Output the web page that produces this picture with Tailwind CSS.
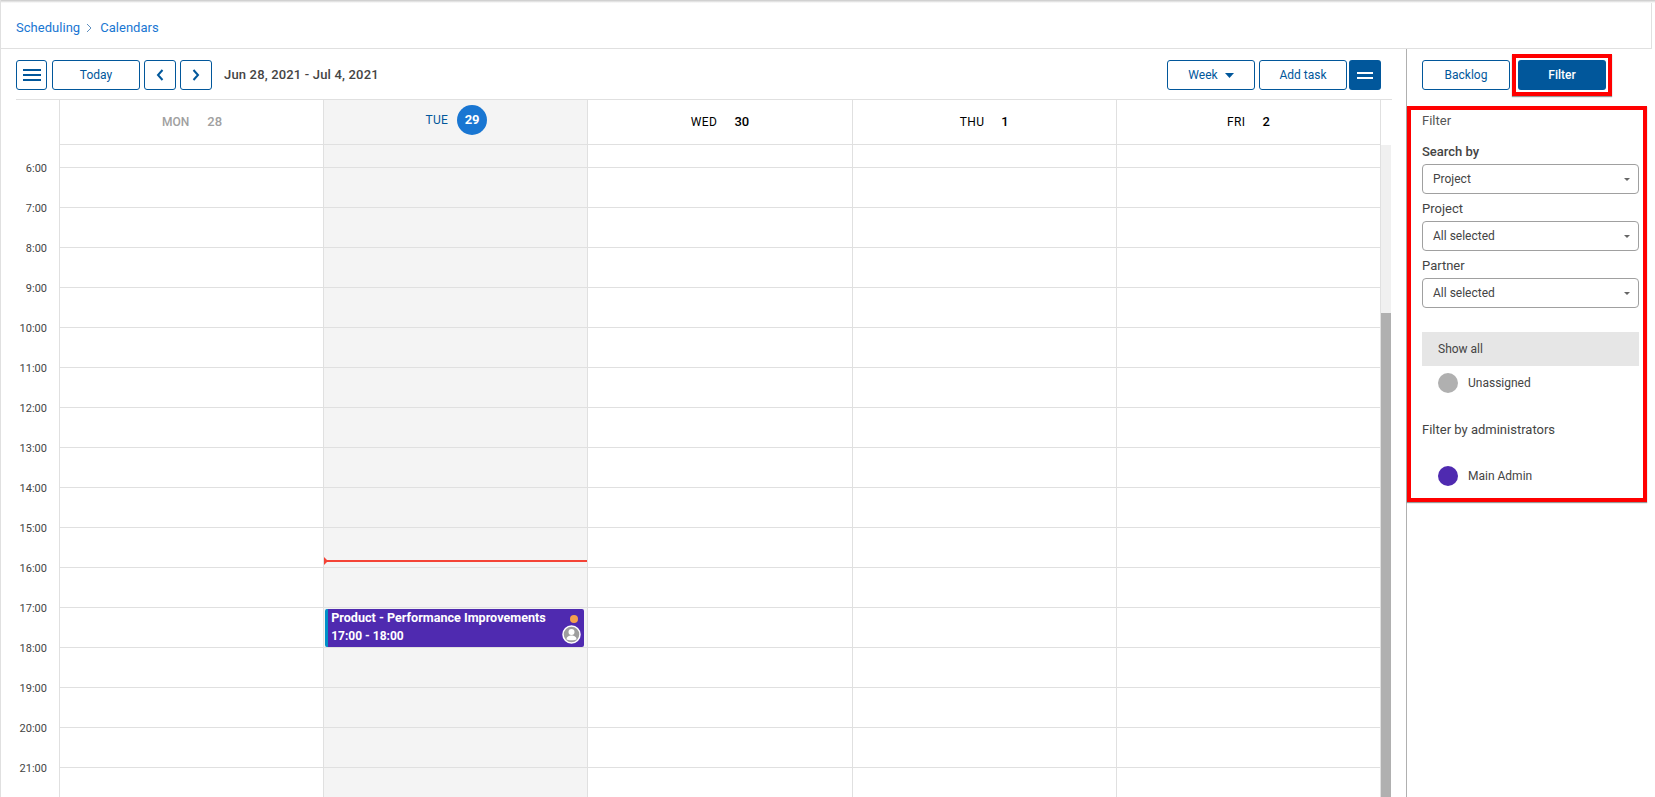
<!DOCTYPE html>
<html lang="en">
<head>
  <meta charset="UTF-8" />
  <title>Calendars</title>
  <script src="https://cdn.jsdelivr.net/npm/@tailwindcss/browser@4"></script>
</head>
<body class="bg-white overflow-hidden font-['Roboto',sans-serif]">
  <div class="h-[797px] w-[1655px] flex flex-col overflow-hidden border-l border-[#e0e0e0] relative">
    <div class="absolute top-0 left-0 right-0 h-[3px] bg-gradient-to-b from-[#c8c8c8] to-white"></div>

    <!-- breadcrumb -->
    <div class="h-[49px] w-[1651px] shrink-0 border-b border-r border-[#e0e0e0] flex items-center pl-[15px] pt-[8px] text-[13px] tracking-[0.03px] text-[#1976d2]">
      <span>Scheduling</span>
      <svg class="w-[8px] h-[10px] ml-[5px] mr-[7px]" viewBox="0 0 8 10" fill="none" stroke="#5f8fc0" stroke-width="1"><path d="M2 1l4 4-4 4"/></svg>
      <span>Calendars</span>
    </div>

    <div class="flex flex-1 min-h-0">
      <!-- calendar -->
      <div class="w-[1405px] shrink-0 pl-[15px] pr-[14px] flex flex-col min-h-0">
        <div class="h-[50px] shrink-0 pt-[11px] flex">
          <button class="w-[31px] h-[30px] border border-[#01579b] rounded-[3px] flex items-center justify-center">
            <svg class="w-[18px] h-[14px]" viewBox="0 0 18 14" fill="none" stroke="#01579b" stroke-width="2"><path d="M0 2h18M0 7h18M0 12h18"/></svg>
          </button>
          <button class="w-[88px] h-[30px] ml-[5px] border border-[#01579b] rounded-[3px] text-[12px] text-[#01579b]">Today</button>
          <button class="w-[32px] h-[30px] ml-[4px] border border-[#01579b] rounded-[3px] flex items-center justify-center">
            <svg class="w-[8px] h-[12px]" viewBox="0 0 8 12" fill="none" stroke="#01579b" stroke-width="2"><path d="M6.5 1L2 6l4.500 5"/></svg>
          </button>
          <button class="w-[32px] h-[30px] ml-[4px] border border-[#01579b] rounded-[3px] flex items-center justify-center">
            <svg class="w-[8px] h-[12px]" viewBox="0 0 8 12" fill="none" stroke="#01579b" stroke-width="2"><path d="M1.5 1L6 6l-4.500 5"/></svg>
          </button>
          <div class="ml-[12px] h-[30px] leading-[29px] text-[13px] font-medium tracking-[0.17px] text-[#444]">Jun 28, 2021 - Jul 4, 2021</div>
          <div class="ml-auto flex pr-[11px]">
            <button class="w-[88px] h-[30px] border border-[#01579b] rounded-[3px] text-[12px] text-[#01579b] flex items-center justify-center gap-[7px]">
              <span>Week</span>
              <svg class="w-[9px] h-[5px]" viewBox="0 0 9 5" fill="#01579b"><path d="M0 0h9L4.500 5z"/></svg>
            </button>
            <button class="w-[88px] h-[30px] ml-[4px] border border-[#01579b] rounded-[3px] text-[12px] text-[#01579b]">Add task</button>
            <button class="w-[32px] h-[30px] ml-[2px] bg-[#01579b] rounded-[3px] flex items-center justify-center">
              <svg class="w-[16px] h-[7px]" viewBox="0 0 16 7" fill="none" stroke="#fff" stroke-width="2"><path d="M0 1h16M0 6h16"/></svg>
            </button>
          </div>
        </div>

        <!-- day header -->
        <div class="h-[46px] shrink-0 border-t border-[#e0e0e0] flex">
          <div class="w-[43px] shrink-0"></div>
          <div class="w-[1322px] grid grid-cols-5 border-r border-[#e0e0e0]">
            <div class="border-l border-b border-[#e0e0e0] flex items-center justify-center pl-[1px] text-[#a0a0a0] font-medium"><span class="text-[12px]">MON</span><span class="text-[13px] ml-[18px]">28</span></div>
            <div class="border-l border-b border-[#e0e0e0] bg-[#f4f4f4] flex items-center justify-center pb-[5px] pl-[1px] text-[#01579b]"><span class="text-[12px] tracking-[0.3px]">TUE</span><span class="w-[30px] h-[30px] ml-[9px] rounded-full bg-[#1976d2] text-white text-[13px] font-bold flex items-center justify-center">29</span></div>
            <div class="border-l border-b border-[#e0e0e0] flex items-center justify-center text-black"><span class="text-[12px] tracking-[0.4px]">WED</span><span class="text-[13px] ml-[17px] font-medium">30</span></div>
            <div class="border-l border-b border-[#e0e0e0] flex items-center justify-center text-black"><span class="text-[12px] tracking-[0.4px]">THU</span><span class="text-[13px] ml-[17px] font-medium">1</span></div>
            <div class="border-l border-b border-[#e0e0e0] flex items-center justify-center text-black"><span class="text-[12px] tracking-[0.4px]">FRI</span><span class="text-[13px] ml-[17px] font-medium">2</span></div>
          </div>
        </div>

        <!-- hours -->
        <div class="flex flex-1 min-h-0 overflow-hidden">
          <div id="gutter" class="w-[43px] shrink-0 pt-[16px]"></div>
          <div id="days" class="w-[1322px] grid grid-cols-5 border-r border-[#e0e0e0] content-start"></div>
          <div class="w-[10px] shrink-0 bg-[#f0f0f0] flex flex-col">
            <div class="h-[168px] shrink-0"></div>
            <div class="flex-1 bg-[#b0b0b0]"></div>
          </div>
        </div>
      </div>

      <!-- side panel -->
      <div class="flex-1 border-l border-[#b0b0b0] min-w-0">
        <div class="h-[57px] flex items-start pt-[5px] pl-[15px]">
          <button class="w-[88px] h-[30px] mt-[6px] border border-[#01579b] rounded-[3px] text-[12px] text-[#01579b]">Backlog</button>
          <div class="ml-[2px] border-4 border-[#ff0000] p-[2px] shadow-[0_1px_1px_rgba(0,0,0,0.4)]">
            <button class="block w-[88px] h-[30px] bg-[#01579b] rounded-[3px] text-[12px] font-medium text-white">Filter</button>
          </div>
        </div>
        <div class="w-[240px] h-[396px] border-4 border-[#ff0000] pl-[11px] pr-[4px] shadow-[0_1px_1px_rgba(0,0,0,0.4)] text-[12px] text-[#444]">
          <div class="h-[20px] leading-[22px] text-[13px] text-[#555]">Filter</div>
          <div class="mt-[11px] h-[20px] leading-[22px] text-[13px] font-medium">Search by</div>
          <div class="mt-[3px] h-[30px] border border-[#a0a0a0] rounded-[4px] pl-[10px] pr-[8px] flex items-center justify-between">
            <span>Project</span>
            <svg class="w-[6px] h-[3px]" viewBox="0 0 6 3" fill="#666"><path d="M0 0h6L3 3z"/></svg>
          </div>
          <div class="mt-[5px] h-[22px] leading-[20px] text-[13px]">Project</div>
          <div class="h-[30px] border border-[#a0a0a0] rounded-[4px] pl-[10px] pr-[8px] flex items-center justify-between">
            <span>All selected</span>
            <svg class="w-[6px] h-[3px]" viewBox="0 0 6 3" fill="#666"><path d="M0 0h6L3 3z"/></svg>
          </div>
          <div class="mt-[5px] h-[22px] leading-[20px] text-[13px]">Partner</div>
          <div class="h-[30px] border border-[#a0a0a0] rounded-[4px] pl-[10px] pr-[8px] flex items-center justify-between">
            <span>All selected</span>
            <svg class="w-[6px] h-[3px]" viewBox="0 0 6 3" fill="#666"><path d="M0 0h6L3 3z"/></svg>
          </div>
          <div class="mt-[24px] h-[34px] bg-[#e6e6e6] pl-[16px] flex items-center">Show all</div>
          <div class="h-[34px] pl-[16px] flex items-center">
            <span class="w-[20px] h-[20px] rounded-full bg-[#b0b0b0]"></span>
            <span class="ml-[10px]">Unassigned</span>
          </div>
          <div class="mt-[20px] h-[20px] leading-[20px] text-[13px]">Filter by administrators</div>
          <div class="mt-[20px] h-[32px] pl-[16px] flex items-center">
            <span class="w-[20px] h-[20px] rounded-full bg-[#4f2ab0]"></span>
            <span class="ml-[10px]">Main Admin</span>
          </div>
        </div>
      </div>
    </div>
  </div>

  <script>
    const gutter = document.getElementById("gutter");
    const days = document.getElementById("days");
    let labels = "";
    for (let h = 6; h <= 21; h++) {
      labels += `<div class="h-[40px] pr-[12px] text-right text-[11px] leading-[16px] text-[#444]">${h}:00</div>`;
    }
    gutter.innerHTML = labels;

    let rows = `<div class="h-[23px] border-b border-[#e0e0e0]"></div>`;
    for (let h = 6; h <= 22; h++) {
      rows += `<div class="h-[40px] border-b border-[#e0e0e0]"></div>`;
    }

    const event = `
      <div class="absolute left-0 right-0 top-[415px] h-[2px] bg-[#f44336]"></div>
      <svg class="absolute left-0 top-[412px] w-[4px] h-[8px]" viewBox="0 0 4 8" fill="#f44336"><path d="M0 0l4 4-4 4z"/></svg>
      <div class="absolute left-[1px] right-[3px] top-[464px] h-[38px] bg-[#4f2ab0] rounded-[2px] border-l-[3px] border-[#0090c8] pl-[3px] text-white text-[12px] font-bold">
        <div class="leading-[18px] h-[18px] text-[12.6px]">Product - Performance Improvements</div>
        <div class="leading-[18px]">17:00 - 18:00</div>
        <span class="absolute right-[6px] top-[6px] w-[8px] h-[8px] rounded-full bg-[#f5a04c]"></span>
        <svg class="absolute right-[3px] top-[16px] w-[19px] h-[19px]" viewBox="0 0 19 19">
          <circle cx="9.500" cy="9.500" r="8.500" fill="#9e9e9e" stroke="#fff" stroke-width="1.500"/>
          <circle cx="9.500" cy="7" r="3" fill="#fff"/>
          <path d="M4.500 14.500c0-3 2.500-4 5-4s5 1 5 4c-1.500 1-8.500 1-10 0z" fill="#fff"/>
        </svg>
      </div>`;

    ["", "bg-[#f4f4f4]", "", "", ""].forEach((bg, i) => {
      days.innerHTML += `<div class="relative border-l border-[#e0e0e0] ${bg}">${rows}${i === 1 ? event : ""}</div>`;
    });
  </script>
</body>
</html>
